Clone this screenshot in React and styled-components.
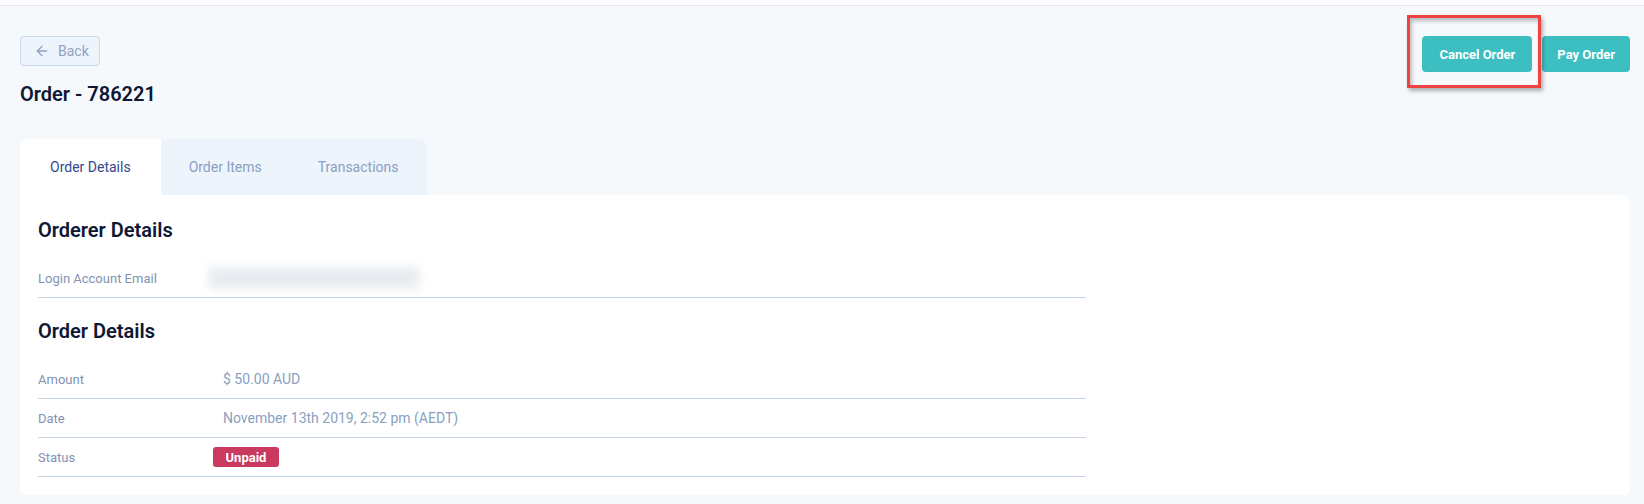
import React from 'react'
import styled, { createGlobalStyle } from 'styled-components'
import { ArrowLeft } from 'lucide-react'

const Global = createGlobalStyle`
  body {
    margin: 0;
    background: #f6f9fc;
    font-family: Roboto, "Liberation Sans", sans-serif;
  }
`

const TopBar = styled.div`
  height: 5px;
  background: #ffffff;
  border-bottom: 1px solid #e3e8ee;
`

const Page = styled.div`
  padding: 30px 14px 10px 20px;
`

const Header = styled.div`
  display: flex;
  justify-content: space-between;
  align-items: flex-start;
`

const HeaderLeft = styled.div`
  display: flex;
  flex-direction: column;
  align-items: flex-start;
  gap: 16px;
`

const BackButton = styled.button`
  display: flex;
  align-items: center;
  gap: 8px;
  height: 30px;
  width: 80px;
  padding: 0 0 0 13px;
  background: #eef4fb;
  border: 1px solid #c9d7ea;
  border-radius: 4px;
  color: #8ea3c3;
  font-family: inherit;
  font-size: 14px;
`

const Title = styled.h1`
  margin: 0;
  font-size: 20px;
  line-height: 24px;
  font-weight: 600;
  color: #0e1733;
`

const Actions = styled.div`
  display: flex;
  gap: 10px;
`

const Highlight = styled.div`
  position: relative;
`

const HighlightBox = styled.span`
  position: absolute;
  top: -21px;
  left: -15px;
  right: -9px;
  bottom: -16px;
  border: 3px solid #ef4343;
  box-shadow: 2px 3px 4px rgba(0, 0, 0, 0.3), inset 2px 3px 4px rgba(0, 0, 0, 0.25);
  pointer-events: none;
`

const ActionButton = styled.button`
  height: 36px;
  padding: 0 ${p => p.$pad}px;
  background: #3dbfc2;
  border: none;
  border-radius: 4px;
  color: #ffffff;
  font-family: inherit;
  font-size: 13px;
  font-weight: 700;
`

const Card = styled.div`
  margin-top: 33px;
`

const TabBar = styled.div`
  display: flex;
  height: 56px;
`

const InactiveGroup = styled.div`
  display: flex;
  background: #edf4fc;
  border-top-right-radius: 8px;
`

const Tab = styled.div`
  display: flex;
  align-items: center;
  padding: 0 ${p => (p.$active ? 30 : 28)}px;
  font-size: 14px;
  color: ${p => (p.$active ? '#34498a' : '#8a9fc2')};
  background: ${p => (p.$active ? '#ffffff' : 'transparent')};
  border-top-left-radius: ${p => (p.$active ? '8px' : '0')};
`

const Body = styled.div`
  background: #ffffff;
  padding: 23px 18px 18px;
  border-radius: 0 8px 6px 6px;
`

const Section = styled.div`
  max-width: 1048px;
  & + & {
    margin-top: 21px;
  }
`

const Heading = styled.h2`
  margin: 0 0 17px;
  font-size: 20px;
  line-height: 24px;
  font-weight: 600;
  color: #0e1733;
`

const Row = styled.div`
  display: flex;
  align-items: center;
  height: 38px;
  border-bottom: 1px solid #c5d4e4;
`

const Label = styled.div`
  width: 175px;
  flex: none;
  font-size: 13px;
  color: #7f93b3;
`

const Value = styled.div`
  padding-left: 10px;
  font-size: 14px;
  color: #8a9fc0;
`

const Blurred = styled.div`
  width: 210px;
  height: 22px;
  margin-left: -4px;
  background: #e8ebf0;
  filter: blur(5px);
`

const Badge = styled.span`
  display: inline-flex;
  align-items: center;
  justify-content: center;
  width: 66px;
  height: 20px;
  background: #c93a5e;
  border-radius: 3px;
  color: #ffffff;
  font-size: 13px;
  font-weight: 700;
`

const orderRows = [
  { label: 'Amount', value: '$ 50.00 AUD' },
  { label: 'Date', value: 'November 13th 2019, 2:52 pm (AEDT)' },
]

export default function App() {
  return (
    <>
      <Global />
      <TopBar />
      <Page>
        <Header>
          <HeaderLeft>
            <BackButton>
              <ArrowLeft size={16} strokeWidth={2} />
              Back
            </BackButton>
            <Title>Order - 786221</Title>
          </HeaderLeft>
          <Actions>
            <Highlight>
              <ActionButton $pad={17}>Cancel Order</ActionButton>
              <HighlightBox />
            </Highlight>
            <ActionButton $pad={15}>Pay Order</ActionButton>
          </Actions>
        </Header>

        <Card>
          <TabBar>
            <Tab $active>Order Details</Tab>
            <InactiveGroup>
              <Tab>Order Items</Tab>
              <Tab>Transactions</Tab>
            </InactiveGroup>
          </TabBar>
          <Body>
            <Section>
              <Heading>Orderer Details</Heading>
              <Row>
                <Label>Login Account Email</Label>
                <Blurred />
              </Row>
            </Section>
            <Section>
              <Heading>Order Details</Heading>
              {orderRows.map(r => (
                <Row key={r.label}>
                  <Label>{r.label}</Label>
                  <Value>{r.value}</Value>
                </Row>
              ))}
              <Row>
                <Label>Status</Label>
                <Badge>Unpaid</Badge>
              </Row>
            </Section>
          </Body>
        </Card>
      </Page>
    </>
  )
}
